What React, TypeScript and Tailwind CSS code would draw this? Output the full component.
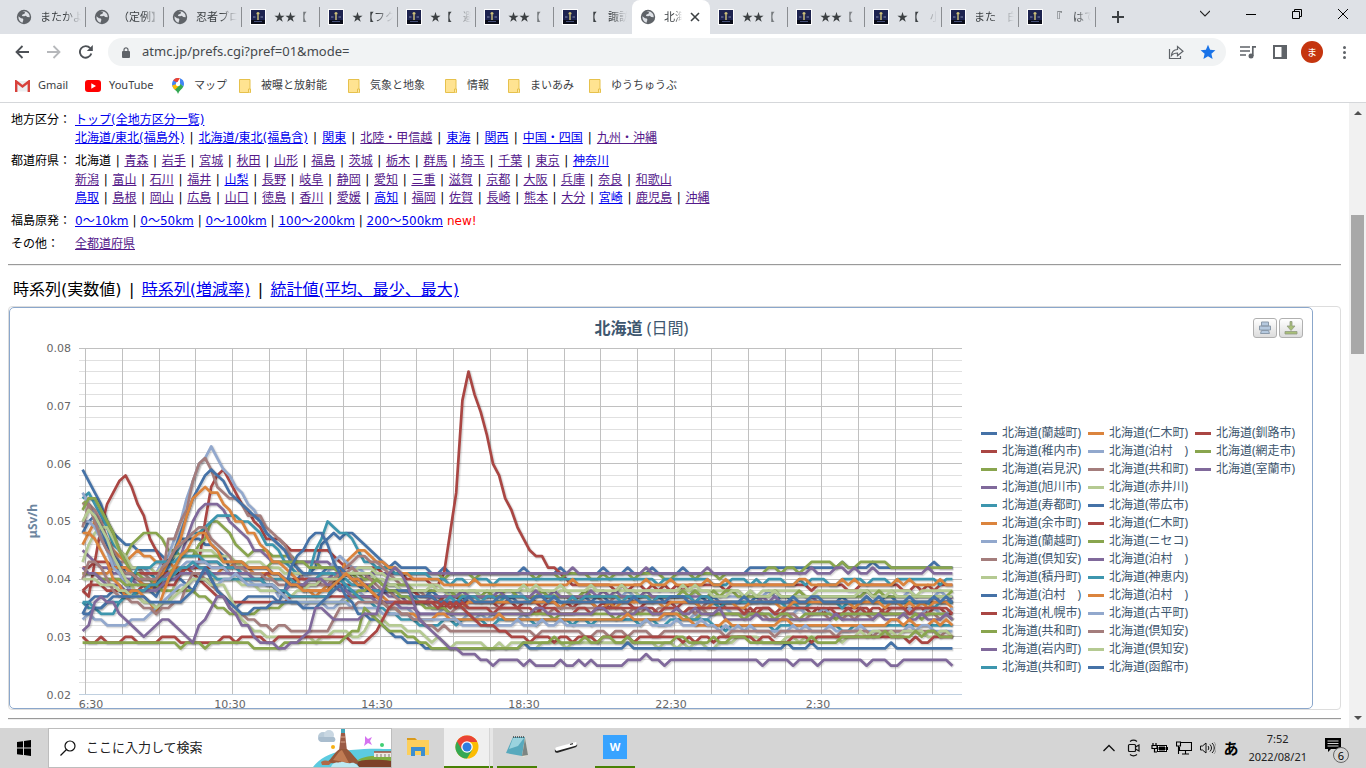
import React from "react";

const BODY = "font-['DejaVu_Sans','Noto_Sans_CJK_JP',sans-serif]";
const UI = "font-['Noto_Sans','Noto_Sans_CJK_JP',sans-serif]";

/* ---------- browser chrome ---------- */

type Tab = { kind: "globe" | "pic"; text: string; active?: boolean; line?: boolean; short?: boolean };

const TABS: Tab[] = [
  { kind: "globe", text: "またかよ", line: true },
  { kind: "globe", text: "（定例】", line: true },
  { kind: "globe", text: "忍者ブロ", line: true },
  { kind: "pic", text: "★★【", line: true },
  { kind: "pic", text: "★【フク", line: true },
  { kind: "pic", text: "★【　避", line: true },
  { kind: "pic", text: "★★【", line: true },
  { kind: "pic", text: "【　諏訪" },
  { kind: "globe", text: "北海", active: true },
  { kind: "pic", text: "★★【", line: true },
  { kind: "pic", text: "★★【", line: true, short: true },
  { kind: "pic", text: "★【　小", line: true, short: true },
  { kind: "pic", text: "また　白", line: true, short: true },
  { kind: "pic", text: "『　はて", line: true, short: true },
];

function Globe() {
  return (
    <svg viewBox="0 0 16 16" className="size-4 shrink-0" aria-hidden="true">
      <circle cx="8" cy="8" r="7.2" fill="#5f6368" />
      <path d="M2.4 7.2 5 9.2l1.8.2.6 1.4-.9 2.9C4 13 2.2 10.8 2.4 7.2ZM6.3 2.3 9 3.1l-.5 1.7-2 .6-.6 1.5 2.3.4 1.5-.6 1.6 1.3 2.4.2c.3-3-2-5.8-5.700-6Z" fill="#dee1e6" />
    </svg>
  );
}

function Pic() {
  return (
    <svg viewBox="0 0 16 16" className="size-4 shrink-0" aria-hidden="true">
      <rect width="16" height="16" fill="#fff" />
      <rect x="1" y="1" width="14" height="14" fill="#1d2350" />
      <rect x="1" y="11" width="14" height="4" fill="#0a0c18" />
      <path d="M8 3v8M6.500 4.500h3" stroke="#cfc27a" strokeWidth="1.400" />
      <path d="M3 8h2.500M10.500 8H13" stroke="#7d87ad" />
      <path d="M4 12.500h8" stroke="#465078" />
    </svg>
  );
}

function TabStrip() {
  return (
    <div className="flex h-[34px] shrink-0 items-stretch bg-[#dee1e6] pl-2">
      <div role="tablist" className="flex">
        {TABS.map((t, i) => (
          <button
            key={i}
            role="tab"
            aria-selected={!!t.active}
            className={`flex shrink-0 items-center overflow-hidden pl-2 ${t.short ? "w-[77px]" : "w-[78px]"} ${
              t.active ? "rounded-t-lg bg-white" : ""
            }`}
          >
            {t.kind === "globe" ? <Globe /> : <Pic />}
            <span
              className={`ml-2 flex-1 overflow-hidden whitespace-nowrap text-left text-[11px] text-[#3c4043] [mask-image:linear-gradient(to_right,#000_60%,transparent)]`}
            >
              {t.text}
            </span>
            {t.active ? (
              <svg viewBox="0 0 10 10" className="mx-2 mr-[10px] size-[10px] shrink-0" aria-hidden="true">
                <path d="M1 1l8 8M9 1l-8 8" stroke="#3c4043" strokeWidth="1.600" />
              </svg>
            ) : (
              <span className={`ml-1 h-5 w-px ${t.line ? "bg-[#8a8d91]" : ""}`} />
            )}
          </button>
        ))}
      </div>
      <button aria-label="新しいタブ" className="ml-4 flex items-center">
        <svg viewBox="0 0 12 12" className="size-3"><path d="M6 0v12M0 6h12" stroke="#3c4043" strokeWidth="2" /></svg>
      </button>
      <div className="ml-auto flex items-center gap-9 pb-[6px] pr-[18px]">
        <button aria-label="タブを検索"><svg viewBox="0 0 10 10" className="size-[10px]"><path d="M0 2l5 5 5-5" fill="none" stroke="#222" strokeWidth="1.100" /></svg></button>
        <button aria-label="最小化"><svg viewBox="0 0 10 10" className="size-[10px]"><path d="M0 5.500h10" stroke="#000" /></svg></button>
        <button aria-label="元に戻す"><svg viewBox="0 0 10 10" className="size-[10px]"><path d="M.5 2.500h7v7h-7zM2.500 2.500v-2h7v7h-2" fill="none" stroke="#000" /></svg></button>
        <button aria-label="閉じる"><svg viewBox="0 0 10 10" className="size-[10px]"><path d="M0 0l10 10M10 0L0 10" stroke="#000" /></svg></button>
      </div>
    </div>
  );
}

function Toolbar() {
  return (
    <div className="flex h-9 shrink-0 items-center bg-white pl-[15px] pr-[14px]">
      <button aria-label="戻る" className="mr-[18px]">
        <svg viewBox="0 0 14 14" className="size-[14px]"><path d="M14 7H1.500M7.500 1l-6 6 6 6" fill="none" stroke="#4d5156" strokeWidth="1.800" /></svg>
      </button>
      <button aria-label="進む" className="mr-[18px]">
        <svg viewBox="0 0 14 14" className="size-[14px]"><path d="M0 7h12.500M6.500 1l6 6-6 6" fill="none" stroke="#b6b8bb" strokeWidth="1.800" /></svg>
      </button>
      <button aria-label="再読み込み" className="mr-[15px]">
        <svg viewBox="0 0 14 14" className="size-[14px]"><path d="M12.300 8.500A5.800 5.800 0 1 1 11.200 3.200" fill="none" stroke="#4d5156" strokeWidth="1.900" /><path d="M13.800 0v6H7.800z" fill="#4d5156" /></svg>
      </button>
      <div className="flex h-7 flex-1 items-center rounded-full bg-[#f1f3f4] pl-[14px] pr-[10px]">
        <svg viewBox="0 0 8 11" className="h-[11px] w-2" aria-hidden="true"><rect y="4" width="8" height="7" rx="1" fill="#5f6368" /><path d="M2 4.500V2.800a2 2 0 0 1 4 0v1.700" fill="none" stroke="#5f6368" strokeWidth="1.200" /></svg>
        <input
          aria-label="アドレス"
          defaultValue="atmc.jp/prefs.cgi?pref=01&mode="
          className="ml-3 min-w-0 flex-1 bg-transparent text-[13px] text-[#45494d] outline-none"
        />
        <button aria-label="共有" className="mr-4">
          <svg viewBox="0 0 16 16" className="size-4"><path d="M1.500 5v9.500h11V12M3.500 11.500c.3-4 2.500-5.800 6-6V2.500l5.500 4.800-5.500 4.500V9c-2.800 0-4.500.6-6 2.500Z" fill="none" stroke="#5f6368" strokeWidth="1.200" /></svg>
        </button>
        <button aria-label="ブックマーク">
          <svg viewBox="0 0 16 16" className="size-4"><path d="M8 .8l2.100 5 5.300.4-4 3.500 1.200 5.300L8 12.200 3.400 15l1.200-5.300-4-3.500 5.300-.4z" fill="#1a73e8" /></svg>
        </button>
      </div>
      <button aria-label="メディア" className="ml-[14px]">
        <svg viewBox="0 0 16 14" className="h-[14px] w-4"><path d="M0 2h10M0 6h10M0 10h6" stroke="#5f6368" strokeWidth="1.600" /><path d="M12.800 11V1.800H16" fill="none" stroke="#5f6368" strokeWidth="1.700" /><circle cx="11" cy="11" r="2.500" fill="#5f6368" /></svg>
      </button>
      <button aria-label="サイドパネル" className="ml-[17px]">
        <svg viewBox="0 0 14 14" className="size-[14px]"><rect x="1" y="1" width="12" height="12" fill="none" stroke="#5f6368" strokeWidth="2" /><path d="M8.500 0H14v14H8.500z" fill="#5f6368" /></svg>
      </button>
      <button className="ml-[14px] flex size-[22px] items-center justify-center rounded-full bg-[#c5350f] text-[10px] text-white">ま</button>
      <button aria-label="メニュー" className="ml-[13px] flex w-4 flex-col items-center gap-[2px]">
        <span className="size-[3px] rounded-full bg-[#5f6368]" />
        <span className="size-[3px] rounded-full bg-[#5f6368]" />
        <span className="size-[3px] rounded-full bg-[#5f6368]" />
      </button>
    </div>
  );
}

function Folder() {
  return (
    <svg viewBox="0 0 12 14" className="h-[14px] w-3 shrink-0" aria-hidden="true">
      <path d="M.5.5h10.500v9.500l.5 1v2.500H.5z" fill="#ffe391" stroke="#e6c14c" />
      <path d="M9.500 13.500v-3.500h2v3.500" fill="#ffe9a8" stroke="#e6c14c" />
    </svg>
  );
}

function Bookmarks() {
  const folders = ["被曝と放射能", "気象と地象", "情報", "まいあみ", "ゆうちゅうぶ"];
  const link = "flex items-center gap-[10px] whitespace-nowrap";
  return (
    <nav className="grid h-[33px] shrink-0 grid-cols-[70px_87px_67px_109px_97px_63px_81px_auto] items-center border-b border-[#d5d7da] bg-white pb-px pl-[15px] text-[11px] text-[#3c4043]">
      <a href="#gmail" className="flex items-center gap-2">
        <svg viewBox="0 0 15 12" className="h-3 w-[15px]" aria-hidden="true"><path d="M1.500 1h12v10.500h-12z" fill="#eceef0" /><path d="M1.200 12V1.500l6.300 5 6.300-5V12" fill="none" stroke="#d8403a" strokeWidth="2.400" /></svg>
        Gmail
      </a>
      <a href="#youtube" className="flex items-center gap-2">
        <svg viewBox="0 0 16 12" className="h-3 w-4" aria-hidden="true"><rect width="16" height="12" rx="3" fill="#f00" /><path d="M6.300 3.200v5.600L11 6z" fill="#fff" /></svg>
        YouTube
      </a>
      <a href="#maps" className={link}>
        <svg viewBox="0 0 12 16" className="h-4 w-3" aria-hidden="true">
          <path d="M6 0a6 6 0 0 0-6 6c0 1.300.4 2.500 1 3.500L6 5z" fill="#4285f4" />
          <path d="M1.200 2.500A6 6 0 0 1 8 .3L5 4.500z" fill="#ea4335" />
          <path d="M8 .3A6 6 0 0 1 12 6c0 1-.2 1.800-.6 2.600L8 6z" fill="#4285f4" />
          <path d="M1 9.500 8.500 6l2.900 2.600C10 11.500 7 12.500 6 16 5 12.500 2.500 12 1 9.500z" fill="#34a853" />
          <path d="M.2 7.500 4.500 6l2 2.300L3 11.800C1.500 10.500.5 9 .2 7.500z" fill="#fbbc04" />
          <circle cx="6" cy="6" r="2.200" fill="#fff" />
        </svg>
        マップ
      </a>
      {folders.map((f) => (
        <a key={f} href={`#${f}`} className={link}>
          <Folder />
          {f}
        </a>
      ))}
    </nav>
  );
}

/* ---------- page navigation; a leading "*" marks a link not yet visited, "=" plain text ---------- */

function LinkRow({ items, className }: { items: string[]; className: string }) {
  return (
    <div className={`flex justify-between whitespace-nowrap ${className}`}>
      {items.map((raw, i) => {
        const fresh = raw.startsWith("*");
        const plain = raw.startsWith("=");
        const text = fresh || plain ? raw.slice(1) : raw;
        return (
          <React.Fragment key={i}>
            {i > 0 && <span>|</span>}
            {plain ? (
              <span>{text}</span>
            ) : (
              <a href={`#${text}`} className={`underline ${fresh ? "text-[#0000ee]" : "text-[#551a8b]"}`}>
                {text}
              </a>
            )}
          </React.Fragment>
        );
      })}
    </div>
  );
}

function AreaNav() {
  return (
    <div className="grid grid-cols-[64px_1fr] gap-y-[5px] pl-[3px] pt-2 text-xs leading-[18px]">
      <span className="whitespace-nowrap">地方区分：</span>
      <div>
        <a href="#top" className="text-[#0000ee] underline">トップ(全地方区分一覧)</a>
        <LinkRow
          className="w-[582px]"
          items={["*北海道/東北(福島外)", "*北海道/東北(福島含)", "*関東", "北陸・甲信越", "*東海", "*関西", "*中国・四国", "九州・沖縄"]}
        />
      </div>
      <span className="whitespace-nowrap">都道府県：</span>
      <div className="flex flex-col">
        <LinkRow
          className="w-[534px]"
          items={["=北海道", "青森", "岩手", "宮城", "秋田", "山形", "福島", "茨城", "栃木", "群馬", "埼玉", "千葉", "東京", "*神奈川"]}
        />
        <LinkRow
          className="w-[597px] pt-px"
          items={["新潟", "富山", "石川", "福井", "*山梨", "長野", "岐阜", "静岡", "愛知", "三重", "滋賀", "京都", "大阪", "兵庫", "奈良", "和歌山"]}
        />
        <LinkRow
          className="w-[635px]"
          items={["*鳥取", "島根", "岡山", "広島", "山口", "徳島", "香川", "愛媛", "*高知", "福岡", "佐賀", "長崎", "熊本", "大分", "*宮崎", "鹿児島", "沖縄"]}
        />
      </div>
      <span className="whitespace-nowrap">福島原発：</span>
      <div className="flex gap-1">
        <LinkRow className="w-[368px]" items={["*0～10km", "*0～50km", "*0～100km", "*100～200km", "*200～500km"]} />
        <span className="text-[#ff0000]">new!</span>
      </div>
      <span className="whitespace-nowrap">その他：</span>
      <div>
        <a href="#all" className="text-[#551a8b] underline">全都道府県</a>
      </div>
    </div>
  );
}

/* ---------- chart ---------- */

const COLORS = ["#4572A7", "#AA4643", "#89A54E", "#80699B", "#3D96AE", "#DB843D", "#92A8CD", "#A47D7C", "#B5CA92"];

const NAMES = [
  "蘭越町", "稚内市", "岩見沢", "旭川市", "寿都町", "余市町", "蘭越町", "倶知安", "積丹町", "泊村　", "札幌市", "共和町", "岩内町", "共和町",
  "仁木町", "泊村　", "共和町", "赤井川", "帯広市", "仁木町", "ニセコ", "泊村　", "神恵内", "泊村　", "古平町", "倶知安", "倶知安", "函館市",
  "釧路市", "網走市", "室蘭市",
];

/* "sample,nSv/h" key points, ten minutes per sample; the last value holds to the end with small noise. */
const KEYS: string[] = [
  "0,59 2,55 4,50 5,48 7,46 9,45 11,45 13,44 14,43 16,47 18,47 20,46 22,45 24,42 30,42 34,39 38,42 39,46 41,48 42,47 43,48 44,48 46,46 48,44 50,42 51,43 52,42 54,42 58,41 108,41 110,42 142,42",
  "0,38 1,37 2,43 3,49 4,53 5,55 6,57 7,58 8,56 9,53 10,51 11,47 12,45 13,43 14,41 16,41 19,43 20,50 21,56 22,58 23,59 24,57 25,55 26,53 28,50 29,49 30,47 31,47 33,46 34,45 38,45 39,45 41,44 43,42 46,42 50,41 54,40 58,39 59,41 61,55 62,71 63,76 64,72 65,69 66,65 67,60 68,58 69,54 70,52 71,49 72,47 73,45 74,44 75,44 76,42 77,42 78,41 79,40 80,39 142,39",
  "0,53 1,54 2,54 4,50 6,45 7,44 8,46 10,48 12,48 13,47 14,45 16,44 18,44 20,47 21,50 22,50 24,48 25,46 27,44 28,45 32,44 36,43 40,42 46,40 48,42 54,41 110,41 113,42 118,42 120,43 130,43 133,42 142,42",
  "0,45 2,43 5,41 8,40 12,38 14,40 16,44 18,50 19,52 20,53 22,53 23,52 24,50 26,48 27,47 28,45 29,45 31,43 36,43 40,43 44,40 50,41 54,41 142,41",
  "0,54 1,55 3,51 5,46 8,42 10,41 12,40 14,42 16,46 18,48 19,48 22,51 25,51 26,50 27,50 28,49 29,48 30,46 31,46 33,43 35,41 37,41 38,45 39,47 40,50 42,48 44,47 46,43 48,42 52,41 60,40 142,40",
  "0,46 1,48 2,50 3,48 5,45 7,43 9,45 10,44 12,43 13,43 15,42 18,42 22,41 26,43 28,41 33,40 36,38 40,38 43,43 45,45 47,44 50,42 55,40 62,39 142,39",
  "0,55 2,51 4,45 6,41 8,42 12,41 14,44 16,50 18,57 19,60 20,61 21,63 22,61 23,59 25,56 27,53 28,52 29,50 30,48 32,46 33,45 35,42 37,40 40,41 42,44 44,42 48,40 52,38 60,37 142,37",
  "0,53 2,52 4,47 6,43 10,41 12,38 13,40 14,47 15,47 16,50 17,52 18,57 19,60 20,61 21,59 22,56 24,54 25,54 26,53 27,51 29,51 30,49 33,46 36,40 40,39 43,42 45,44 48,43 52,39 56,37 142,36",
  "0,43 1,46 2,48 4,49 6,45 8,42 10,42 12,41 14,43 17,45 20,45 22,44 24,44 26,42 28,43 31,42 34,41 38,41 42,40 46,42 50,40 54,39 62,38 142,38",
  "0,48 2,51 4,46 7,41 10,40 12,39 14,42 18,54 19,56 20,58 21,59 23,57 24,55 26,53 28,51 30,48 32,46 34,43 36,41 38,41 42,42 46,38 52,38 60,36 142,36",
  "0,42 3,43 6,42 8,41 12,41 14,41 18,42 22,42 24,41 27,40 29,40 31,41 34,40 38,40 44,39 50,38 58,37 66,36 142,35",
  "0,52 1,54 2,54 4,50 6,45 8,41 10,40 12,39 14,41 17,45 20,44 24,43 28,42 34,43 38,42 44,41 50,39 56,38 64,37 142,37",
  "0,41 4,40 8,40 11,38 14,41 20,43 25,42 30,42 34,39 38,39 42,41 48,38 54,36 62,37 142,36",
  "0,36 3,34 5,34 7,37 9,42 14,43 18,44 20,43 24,42 28,40 32,40 36,39 40,41 44,39 48,38 56,36 62,37 142,36",
  "0,41 3,41 6,42 8,41 11,38 14,43 16,47 18,54 20,56 21,55 22,55 23,53 25,50 26,50 27,48 28,48 29,46 31,43 32,43 34,41 36,38 38,37 40,39 42,41 44,40 50,36 56,36 142,36",
  "0,50 1,50 3,47 5,42 8,38 12,38 16,42 18,43 22,42 25,41 28,39 31,39 32,37 34,36 36,35 38,36 41,35 44,38 50,35 56,34 64,33 142,34",
  "0,49 1,53 3,47 6,42 9,40 12,40 15,45 19,49 20,49 21,47 23,45 25,42 28,41 33,39 40,39 44,42 48,39 52,36 60,35 142,34",
  "0,50 1,52 3,49 5,44 7,40 9,37 12,35 14,36 16,41 20,40 24,40 26,39 30,38 34,37 40,40 46,41 52,38 60,38 142,37",
  "0,34 2,37 4,37 6,38 7,37 10,38 12,37 14,40 16,40 18,38 20,42 22,38 25,35 27,37 30,37 32,36 33,38 34,42 36,45 38,48 39,48 40,46 41,43 43,38 46,37 52,38 58,36 142,36",
  "0,38 1,39 2,39 4,38 8,38 12,39 15,39 17,42 21,38 24,36 30,36 38,37 44,37 52,36 60,36 64,35 142,35",
  "0,41 4,40 8,39 11,39 14,38 18,38 24,34 28,34 30,35 36,36 40,36 43,36 48,40 50,38 56,35 62,34 142,34",
  "0,42 4,39 8,38 12,38 16,41 20,41 26,41 32,38 38,40 44,37 50,36 56,34 66,34 142,33",
  "0,36 2,35 6,36 10,38 14,40 18,43 22,40 28,40 34,37 40,37 42,40 46,36 50,34 56,32 62,33 142,32",
  "0,48 2,47 3,45 5,40 7,37 9,38 11,36 12,34 14,40 18,47 20,48 21,46 23,43 30,42 36,38 40,38 43,41 46,39 50,35 56,33 142,32",
  "0,33 1,34 2,33 4,32 7,32 8,33 10,33 12,35 14,37 18,40 22,39 25,41 27,39 31,39 34,36 40,36 46,35 50,34 56,33 62,32 142,31",
  "0,40 1,43 3,42 5,38 8,36 10,35 12,34 14,35 16,36 18,41 20,40 22,38 24,35 27,33 29,32 31,31 32,32 34,31 40,31 42,35 48,36 52,34 56,32 62,31 142,31",
  "0,40 4,39 7,38 10,36 12,35 14,36 18,40 23,39 26,33 28,31 30,30 36,30 38,29 42,31 45,30 48,34 50,32 54,31 60,29 104,29 110,30 142,31",
  "0,34 3,35 5,37 8,37 12,36 14,36 16,36 18,38 20,42 22,38 26,34 32,36 38,35 42,39 45,34 48,33 50,31 53,29 58,28 142,28",
  "0,30 1,29 2,29 3,30 4,29 6,29 7,30 8,30 9,29 12,29 14,30 15,30 16,29 22,29 23,30 24,30 25,29 26,30 29,30 30,29 31,29 32,30 42,30 44,29 46,29 48,31 50,35 52,36 61,36 63,34 66,32 69,31 72,30 142,30",
  "0,29 15,29 16,28 17,29 19,29 20,28 21,29 27,29 28,28 32,28 34,29 42,29 44,31 45,31 46,35 48,33 50,31 54,30 57,28 64,28 80,29 122,29 126,30 142,30",
  "0,31 1,32 2,36 3,37 4,36 5,36 6,34 10,30 12,32 13,33 14,33 18,29 19,32 20,33 21,35 22,37 23,37 24,35 25,34 26,32 27,32 28,30 29,29 31,29 32,28 33,28 34,29 35,29 37,31 38,35 39,35 41,33 45,33 46,34 48,34 49,38 50,41 51,42 52,41 53,39 55,33 58,30 60,28 62,27 64,27 65,26 66,26 67,25 68,26 71,26 72,25 73,26 74,25 77,25 78,26 79,25 80,25 81,26 82,25 83,26 84,25 88,25 89,26 91,26 92,27 93,26 94,26 95,25 96,26 110,26 111,25 112,26 115,26 116,25 117,26 119,26 120,25 121,26 127,26 128,25 129,26 131,26 132,25 133,25 134,26 141,26 142,25",
];

const SAMPLES = 143;

function noise(sample: number, row: number): number {
  let h = (sample * 374761393 + row * 668265263) | 0;
  h = Math.imul(h ^ (h >>> 13), 1274126177);
  return ((h ^ (h >>> 16)) >>> 0) / 4294967296;
}

function valuesOf(row: number): number[] {
  const keys = KEYS[row].split(" ").map((p) => p.split(",").map(Number));
  const direction = row % 3 === 0 ? 1 : row % 3 === 1 ? -1 : row % 2 ? 1 : -1;
  const chance = row === 30 ? 0 : row === 3 || row === 27 ? 0.07 : 0.2;
  const settled = row === 1 ? 82 : 56;
  const out: number[] = [];
  let k = 0;
  for (let i = 0; i < SAMPLES; i++) {
    while (k < keys.length - 2 && i > keys[k + 1][0]) k++;
    const [a, va] = keys[k];
    const [b, vb] = keys[k + 1];
    let v = Math.round(va + ((vb - va) * (i - a)) / (b - a));
    if (i > settled && noise(i, row + 1) < chance) v += direction;
    out.push(v);
  }
  return out;
}

const yOf = (v: number) => 696.5 - (v - 20) * 5.767;

const PATHS = KEYS.map((_, row) =>
  valuesOf(row)
    .map((v, i) => `${i ? "L" : "M"}${(82.6 + i * 6.125).toFixed(1)} ${yOf(v).toFixed(1)}`)
    .join("")
);

function Plot() {
  const minor = Array.from({ length: 31 }, (_, i) => i).filter((i) => i % 5 !== 0);
  const cols = Array.from({ length: 24 }, (_, i) => Math.round(85 + i * 36.82) + 0.5);
  return (
    <svg viewBox="10 342 971 368" className="block min-w-0 flex-1" role="img" aria-label="北海道 (日間)">
      {minor.map((i) => (
        <path key={i} d={`M79 ${Math.round(696 - i * 11.53) + 0.5}H962`} stroke="#e0e0e0" />
      ))}
      {cols.map((x) => (
        <path key={x} d={`M${x} 350V696`} stroke="#c0c0c0" />
      ))}
      {[30, 40, 50, 60, 70, 80].map((v) => (
        <path key={v} d={`M79 ${Math.round(yOf(v) - 0.5) + 0.5}H962`} stroke="#c0c0c0" />
      ))}
      <path d="M79 696.500H962" stroke="#c0d0e0" />
      <g fill="none" strokeLinejoin="round">
        {PATHS.map((d, row) => (
          <React.Fragment key={row}>
            <path d={d} transform="translate(1 1)" stroke="#000" strokeOpacity="0.05" strokeWidth="5" />
            <path d={d} transform="translate(1 1)" stroke="#000" strokeOpacity="0.1" strokeWidth="3" />
            <path d={d} stroke={COLORS[row % 9]} strokeWidth="2.700" />
          </React.Fragment>
        ))}
      </g>
      <g fontSize="11" fill="#666" className="font-['DejaVu_Sans',sans-serif]">
        {[80, 70, 60, 50, 40, 30, 20].map((v) => (
          <text key={v} x="71" y={yOf(v) + 4} textAnchor="end">{(v / 1000).toFixed(2)}</text>
        ))}
        {["6:30", "10:30", "14:30", "18:30", "22:30", "2:30"].map((t, i) => (
          <text key={t} x={[91, 230, 377, 524, 671, 818][i]} y="710" textAnchor="middle">{t}</text>
        ))}
      </g>
      <text transform="translate(37 523) rotate(-90)" textAnchor="middle" fontSize="12" fontWeight="bold" fill="#6D869F" className="font-['Noto_Sans',sans-serif]">
        μSv/h
      </text>
    </svg>
  );
}

const SWATCHES = ["bg-[#4572A7]", "bg-[#AA4643]", "bg-[#89A54E]", "bg-[#80699B]", "bg-[#3D96AE]", "bg-[#DB843D]", "bg-[#92A8CD]", "bg-[#A47D7C]", "bg-[#B5CA92]"];

function Legend() {
  return (
    <ul className={`mt-[84px] grid w-[331px] shrink-0 grid-flow-col grid-cols-[107px_107px_107px] grid-rows-[repeat(14,18px)] content-start text-xs text-[#3E576F] ${UI}`}>
      {NAMES.map((n, i) => (
        <li key={i} className="flex items-center gap-[5px] whitespace-pre">
          <span className={`h-[3px] w-4 shrink-0 ${SWATCHES[i % 9]}`} />
          {`北海道(${n})`}
        </li>
      ))}
    </ul>
  );
}

function ChartCard() {
  const btn = "flex h-5 w-6 items-center justify-center rounded-[3px] border border-[#b0b0b0] bg-linear-to-b from-white to-[#dcdcdc]";
  return (
    <section className="rounded border border-[#dddddd]">
      <div className="max-w-[1304px] overflow-hidden rounded-[5px] border border-[#8ba7cb]">
        <header className={`flex h-8 items-center pl-5 pr-[9px] pt-2 ${UI}`}>
          <h2 className="flex-1 text-center text-base text-[#3E576F]">
            <b>北海道</b> (日間)
          </h2>
          <div className="flex gap-[2px]">
            <button aria-label="印刷" className={btn}>
              <svg viewBox="0 0 14 14" className="size-[14px]"><path d="M3.500 1h7v4h-7zM1.500 5h11v4h-11zM3.500 9.500h7l1 3h-9z" fill="#b5c9df" stroke="#8b9aaa" /></svg>
            </button>
            <button aria-label="ダウンロード" className={btn}>
              <svg viewBox="0 0 14 14" className="size-[14px]"><path d="M6 .5h2V5h3L7 9.500 3 5h3zM1 10.500h12v2.500H1z" fill="#a8bf77" stroke="#8f9b80" strokeWidth=".8" /></svg>
            </button>
          </div>
        </header>
        <div className="flex items-start">
          <Plot />
          <Legend />
        </div>
      </div>
    </section>
  );
}

/* ---------- taskbar ---------- */

function Island() {
  return (
    <svg viewBox="0 0 78 38" className="h-[38px] w-[78px] shrink-0" aria-hidden="true">
      <path d="M0 38C6 30 18 22 38 21c20-2 30-1 40-1v18z" fill="#5ccbe0" />
      <path d="M28 38c0-5 10-8 20-6l30 2v4z" fill="#2aa5c4" />
      <circle cx="10" cy="8" r="5" fill="#b9cbd9" /><circle cx="16" cy="6" r="5" fill="#c9d7e2" /><path d="M6 8h15a3 3 0 0 1 0 5H8a3 3 0 0 1-2-5z" fill="#a9bdce" />
      <path d="M28 4h4l2 18h-8z" fill="#9c5b45" /><path d="M28 8h4M27.500 13h5" stroke="#d8a58a" />
      <rect x="28" y="0" width="4" height="4" fill="#3fa9bd" />
      <path d="M13 34c6-4 9-12 14-14h7c5 4 9 10 14 15z" fill="#96573a" /><path d="M20 31c4-5 6-9 9-10l7 13z" fill="#c07b53" />
      <path d="M46 38c-6-6 6-8 14-11l18 1v10z" fill="#7d4128" />
      <path d="M44 32c4-4 12-6 34-5v5c-14-2-24-1-34 0z" fill="#7fae3f" />
      <path d="M61 23h17v5H61z" fill="#eee8e2" /><path d="M61 23h17" stroke="#9c4f3c" strokeWidth="1.500" /><path d="M64 25v3M68 25v3M72 25v3M76 25v3" stroke="#857b76" />
      <path d="M18 38c2-6 8-4 10-5s6 2 10 1 6 2 8 4z" fill="#bdeaf3" />
      <path d="M8 33c4-2 7-2 10 1l-2 2H9z" fill="#b06a46" />
      <path d="M52 7l3 3 4-2-2 4 2 4-4-2-4 3 1-4z" fill="#d573f0" />
      <circle cx="20" cy="18" r="2" fill="#f7b014" /><circle cx="69" cy="16" r="2" fill="#41cf74" />
    </svg>
  );
}

function Taskbar() {
  const app = "flex h-full items-center justify-center border-b-2";
  return (
    <footer className="flex h-10 shrink-0 items-center bg-[#d5d5d5]">
      <button aria-label="スタート" className="flex w-12 justify-center">
        <svg viewBox="0 0 14 16" className="h-4 w-[14px]"><path d="M0 2l6-.8V7.500H0zM7 1l7-1v7.500H7zM0 8.500h6V15l-6-.8zM7 8.500h7V16l-7-1z" fill="#000" /></svg>
      </button>
      <label className="flex h-10 w-[344px] items-center border border-[#bdbdbd] bg-white pl-[11px]">
        <svg viewBox="0 0 16 16" className="size-4 shrink-0" aria-hidden="true"><circle cx="10" cy="6" r="5" fill="none" stroke="#111" strokeWidth="1.200" /><path d="M6.500 9.500.5 15.500" stroke="#111" strokeWidth="1.300" /></svg>
        <input aria-label="検索" placeholder="ここに入力して検索" className="ml-[10px] min-w-0 flex-1 text-[13px] outline-none placeholder:text-[#222]" />
        <Island />
      </label>
      <button aria-label="エクスプローラー" className={`${app} w-[52px] border-transparent`}>
        <svg viewBox="0 0 22 20" className="h-5 w-[22px]"><path d="M0 1h8l2 2h12v15H0z" fill="#fccf5b" /><path d="M0 1h8l2 2H0z" fill="#d99a1c" /><path d="M4 19v-9h14v9h-4v-5H8v5z" fill="#3c8ed0" /></svg>
      </button>
      <button aria-label="Chrome" className={`${app} w-[45px] border-[#498205] bg-[#efefef]`}>
        <svg viewBox="0 0 24 24" className="size-6">
          <circle cx="12" cy="12" r="11.500" fill="#fbbc04" />
          <path d="M2 6.250A11.500 11.500 0 0 0 12 23.500L17.200 15 12 12z" fill="#34a853" />
          <path d="M2 6.250A11.500 11.500 0 0 1 22 6.250L22 7H12L6.800 14.500z" fill="#ea4335" />
          <circle cx="12" cy="12" r="5.800" fill="#fff" /><circle cx="12" cy="12" r="4.500" fill="#2f7de1" />
        </svg>
      </button>
      <span className="ml-px h-full w-[3px] border-b-2 border-[#498205] bg-[#e6e6e6]" />
      <button aria-label="メモ帳" className={`${app} ml-1 w-10 border-[#498205]`}>
        <svg viewBox="0 0 24 24" className="size-6"><path d="M9 2h11l3 18-5 2z" fill="#efe9d2" /><path d="M8 2h12l-3 19L1 18z" fill="#58a9bd" /><path d="M8 3h11l-6 8-9 3z" fill="#9ad3de" /><path d="M20 3l3 17-6 1z" fill="#7c8583" /><path d="M8 2h12" stroke="#444" strokeWidth="1.500" strokeDasharray="1 1" /></svg>
      </button>
      <button aria-label="デバイス" className={`${app} w-[58px] border-transparent`}>
        <svg viewBox="0 0 26 14" className="h-[14px] w-[26px]"><path d="M4 10.500 22 5" stroke="#222" strokeWidth="4.500" strokeLinecap="round" /><path d="M4 9 22 4" stroke="#fff" strokeWidth="3.800" strokeLinecap="round" /><path d="M17 4.500l3-.8" stroke="#333" strokeWidth="1.200" /></svg>
      </button>
      <button aria-label="W" className={`${app} w-10 border-[#498205]`}>
        <span className="flex size-6 items-center justify-center bg-[#38a3ff] text-[11px] font-bold text-white">W</span>
      </button>
      <div className="ml-auto flex items-center pr-[17px] text-black">
        <button aria-label="隠れているインジケーター" className="mr-3">
          <svg viewBox="0 0 12 8" className="h-2 w-3"><path d="M.5 7 6 1.500 11.500 7" fill="none" stroke="#111" strokeWidth="1.300" /></svg>
        </button>
        <svg viewBox="0 0 14 18" className="mr-[10px] h-[18px] w-[14px]" aria-hidden="true"><rect x="1.500" y="5.500" width="7" height="7" rx="1" fill="none" stroke="#111" strokeWidth="1.200" /><path d="M8.500 8 12 6v6l-3.500-2M3 2.500c2-1.500 5-1.500 7 0M3 15.500c2 1.500 5 1.500 7 0" fill="none" stroke="#111" strokeWidth="1.200" /></svg>
        <svg viewBox="0 0 17 12" className="mr-2 h-3 w-[17px]" aria-hidden="true"><rect x="6.500" y="3.500" width="9" height="6" fill="#fff" stroke="#000" /><path d="M8 5h6v3H8z" fill="#000" stroke="#000" /><path d="M16.500 5v3M1 3.500h5v3H1zM2 1v2M5 1v2M3.500 7v3H6" fill="none" stroke="#000" strokeWidth="1.200" /></svg>
        <svg viewBox="0 0 16 14" className="mr-2 h-[14px] w-4" aria-hidden="true"><path d="M5 1.500h10.500v8H3.500V6M9.500 9.500V13M6 13h7M.5 1h4v4h-4zM2.500 5v8" fill="none" stroke="#000" strokeWidth="1.100" /></svg>
        <svg viewBox="0 0 16 14" className="mr-[7px] h-[14px] w-4" aria-hidden="true"><path d="M.5 5v4h2L6 12V2L2.500 5zM8 5c1 1 1 3 0 4M10 3.500c2 2 2 5 0 7M12 2c3 3 3 7 0 10" fill="none" stroke="#111" /><path d="M14 1c3 4 3 8 0 12" fill="none" stroke="#999" /></svg>
        <span className="mr-[10px] text-[15px] font-bold leading-none">あ</span>
        <div className="text-center text-[11px] leading-[18px] text-[#222]">
          7:52
          <br />
          2022/08/21
        </div>
        <div className="relative ml-[18px] h-[22px] w-6">
          <svg viewBox="0 0 16 16" className="size-4" aria-hidden="true"><path d="M0 1h16v11H6l-3 3v-3H0z" fill="#000" /><path d="M2.500 4h11M2.500 6.500h11M2.500 9h11" stroke="#d5d5d5" /></svg>
          <span className="absolute -bottom-1 right-0 flex size-4 items-center justify-center rounded-full border border-[#666] bg-[#d5d5d5] text-[11px] leading-none">6</span>
        </div>
      </div>
    </footer>
  );
}

/* ---------- page ---------- */

export default function App() {
  return (
    <div className={`flex h-screen flex-col overflow-hidden bg-white ${UI}`}>
      <TabStrip />
      <Toolbar />
      <Bookmarks />
      <div className="flex min-h-0 flex-1">
        <main className={`min-w-0 flex-1 overflow-hidden px-2 text-black ${BODY}`}>
          <AreaNav />
          <hr className="mt-[11px] border-t-[#9a9a9a] border-b border-b-[#eeeeee]" />
          <div className="pb-1 pl-[5px] pt-3 text-base leading-6">
            <LinkRow className="w-[446px]" items={["=時系列(実数値)", "*時系列(増減率)", "*統計値(平均、最少、最大)"]} />
          </div>
          <ChartCard />
          <hr className="mt-2 border-t-[#9a9a9a] border-b border-b-[#eeeeee]" />
        </main>
        <div className="flex w-[17px] flex-col items-center bg-[#f1f1f1] py-2">
          <svg viewBox="0 0 8 4" className="h-1 w-2" aria-hidden="true"><path d="M0 4 4 0l4 4z" fill="#505050" /></svg>
          <div className="mt-[100px] h-[139px] w-[13px] bg-[#a8a8a8]" />
          <svg viewBox="0 0 8 4" className="mt-auto h-1 w-2" aria-hidden="true"><path d="M0 0l4 4 4-4z" fill="#505050" /></svg>
        </div>
      </div>
      <Taskbar />
    </div>
  );
}
